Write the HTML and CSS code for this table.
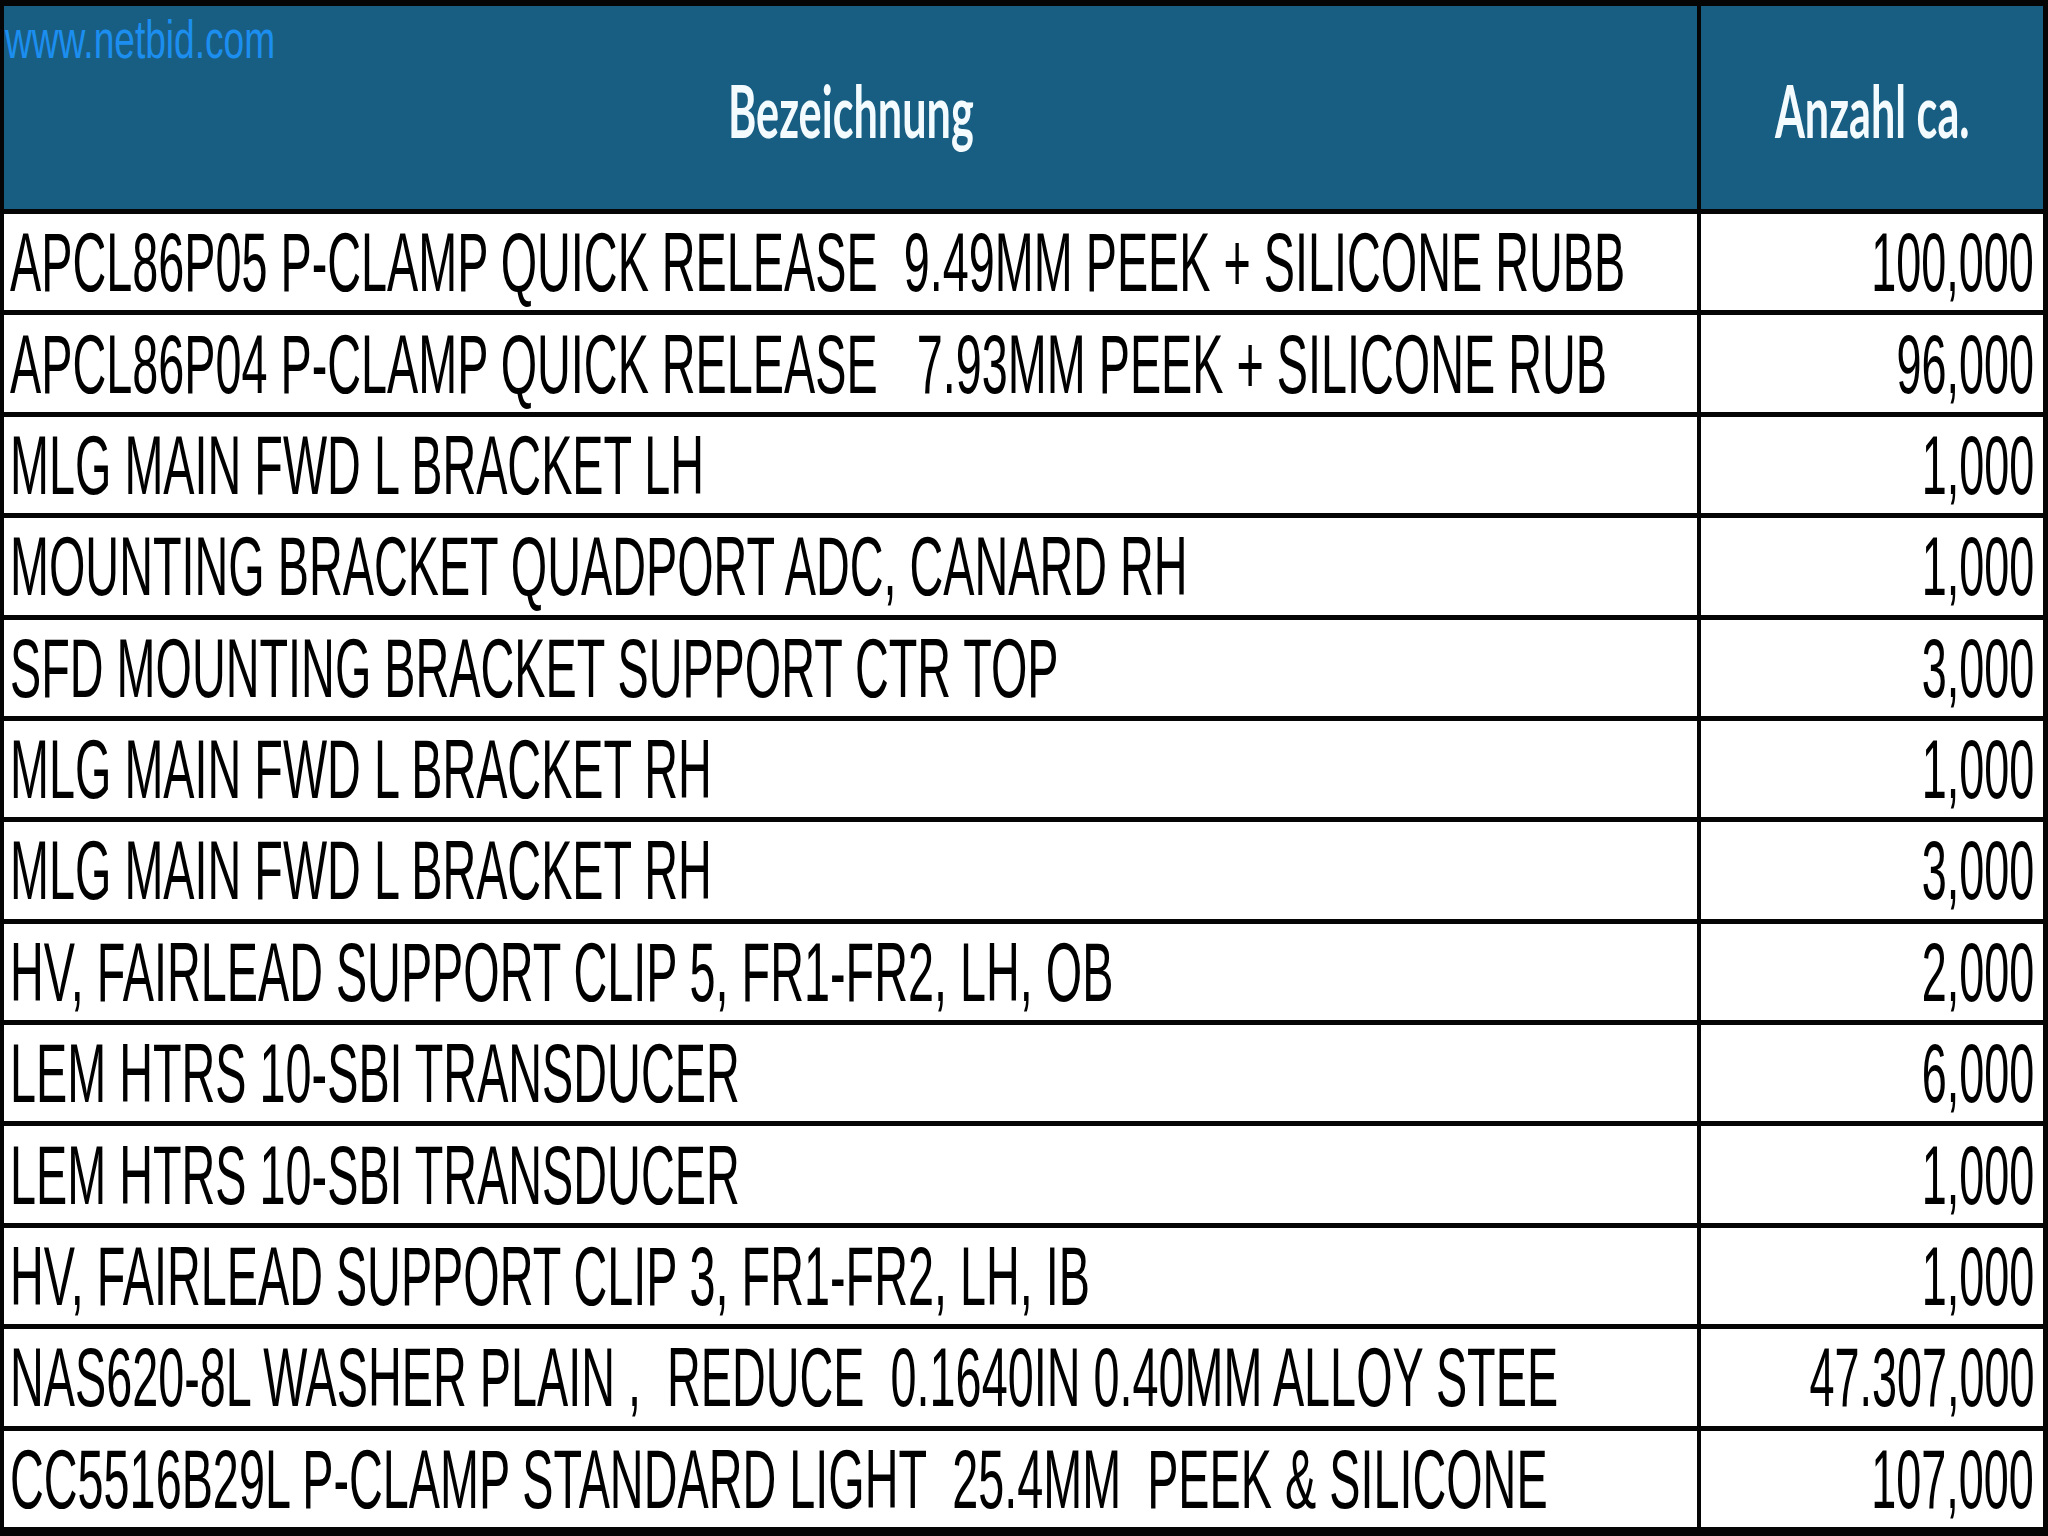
FILE: index.html
```html
<!DOCTYPE html>
<html>
<head>
<meta charset="utf-8">
<link rel="stylesheet" href="styles.css">
</head>
<body>
<div class="sheet">
  <div class="hcell hname">
    <span class="watermark">www.netbid.com</span>
    <span class="htext">Bezeichnung</span>
  </div>
  <div class="hcell"><span class="htext">Anzahl ca.</span></div>

  <div class="cell name"><span class="t">APCL86P05 P-CLAMP QUICK RELEASE  9.49MM PEEK + SILICONE RUBB</span></div>
  <div class="cell qty"><span class="t">100,000</span></div>

  <div class="cell name"><span class="t">APCL86P04 P-CLAMP QUICK RELEASE   7.93MM PEEK + SILICONE RUB</span></div>
  <div class="cell qty"><span class="t">96,000</span></div>

  <div class="cell name"><span class="t">MLG MAIN FWD L BRACKET LH</span></div>
  <div class="cell qty"><span class="t">1,000</span></div>

  <div class="cell name"><span class="t">MOUNTING BRACKET QUADPORT ADC, CANARD RH</span></div>
  <div class="cell qty"><span class="t">1,000</span></div>

  <div class="cell name"><span class="t">SFD MOUNTING BRACKET SUPPORT CTR TOP</span></div>
  <div class="cell qty"><span class="t">3,000</span></div>

  <div class="cell name"><span class="t">MLG MAIN FWD L BRACKET RH</span></div>
  <div class="cell qty"><span class="t">1,000</span></div>

  <div class="cell name"><span class="t">MLG MAIN FWD L BRACKET RH</span></div>
  <div class="cell qty"><span class="t">3,000</span></div>

  <div class="cell name"><span class="t">HV, FAIRLEAD SUPPORT CLIP 5, FR1-FR2, LH, OB</span></div>
  <div class="cell qty"><span class="t">2,000</span></div>

  <div class="cell name"><span class="t">LEM HTRS 10-SBI TRANSDUCER</span></div>
  <div class="cell qty"><span class="t">6,000</span></div>

  <div class="cell name"><span class="t">LEM HTRS 10-SBI TRANSDUCER</span></div>
  <div class="cell qty"><span class="t">1,000</span></div>

  <div class="cell name"><span class="t">HV, FAIRLEAD SUPPORT CLIP 3, FR1-FR2, LH, IB</span></div>
  <div class="cell qty"><span class="t">1,000</span></div>

  <div class="cell name"><span class="t">NAS620-8L WASHER PLAIN ,  REDUCE  0.1640IN 0.40MM ALLOY STEE</span></div>
  <div class="cell qty"><span class="t">47.307,000</span></div>

  <div class="cell name"><span class="t">CC5516B29L P-CLAMP STANDARD LIGHT  25.4MM  PEEK &amp; SILICONE</span></div>
  <div class="cell qty"><span class="t">107,000</span></div>
</div>
</body>
</html>
```
FILE: styles.css
```css
html, body {
  margin: 0;
  padding: 0;
  overflow: hidden;
  background: #000;
}

.sheet {
  box-sizing: border-box;
  width: 2048px;
  height: 1536px;
  background: #050505;
  padding: 6px 5px 9px 4px;
  display: grid;
  grid-template-columns: 1693px 1fr;
  grid-template-rows: 203px repeat(13, 1fr);
  column-gap: 4px;
  row-gap: 5px;
}

.hcell {
  position: relative;
  background: #185e82;
  display: flex;
  align-items: center;
  justify-content: center;
}

.htext {
  font-family: "Lato", "Open Sans", sans-serif;
  font-weight: 700;
  font-size: 72px;
  line-height: 1;
  color: #f4fbff;
  display: inline-block;
  transform: scaleX(0.6);
  margin-top: 4px;
}

.watermark {
  position: absolute;
  left: 1px;
  top: 7px;
  font-family: "Liberation Sans", Arial, sans-serif;
  font-size: 53px;
  line-height: 1;
  color: #1c8ef0;
  transform: scaleX(0.70);
  transform-origin: left top;
  white-space: nowrap;
}

.cell {
  background: #fff;
  display: flex;
  align-items: center;
  overflow: hidden;
}

.cell.name {
  justify-content: flex-start;
  padding-left: 6px;
}

.cell.qty {
  justify-content: flex-end;
  padding-right: 9px;
}

.t {
  font-family: "Liberation Sans", Arial, sans-serif;
  font-size: 84px;
  line-height: 1;
  color: #000;
  white-space: pre;
  display: inline-block;
}

.name .t {
  transform: scaleX(0.557);
  transform-origin: left center;
}

.qty .t {
  transform: scaleX(0.535);
  transform-origin: right center;
}
```
